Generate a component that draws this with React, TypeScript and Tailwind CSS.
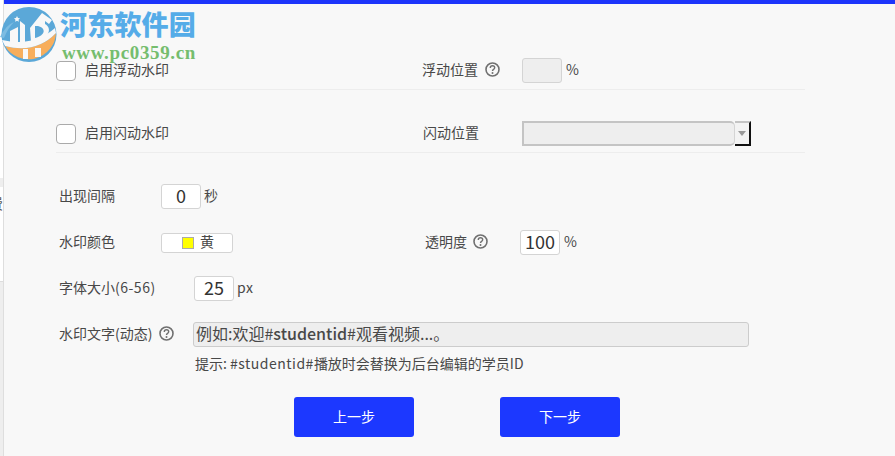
function Help() {
  return (
    <span className="pb-[3px] shrink-0">
      <svg width="15" height="15" viewBox="0 0 15 15" fill="none" className="block">
        <circle cx="7.5" cy="7.5" r="6.5" stroke="#707070" strokeWidth="1.6" />
        <path d="M5.3 5.9c0-1.4 1.1-2.1 2.2-2.1s2.2.8 2.2 2c0 1.6-2.2 1.6-2.2 3.2" stroke="#707070" strokeWidth="1.4" />
        <circle cx="7.5" cy="11" r="1" fill="#707070" />
      </svg>
    </span>
  );
}

function Logo() {
  return (
    <div className="absolute left-0 top-0 flex">
      <svg width="60" height="66" viewBox="0 0 60 66" className="shrink-0">
        <circle cx="29" cy="34.5" r="27.5" fill="#5ba8d8" />
        <path d="M5 46 Q36 54 56 33 A27.5 27.5 0 0 1 5 46Z" fill="#f7ae5c" />
        <path d="M2 40 Q34 47 55 28 L56 33 Q36 54 5 46Z" fill="#f8f8f8" />
        <path d="M10 42 V31 L18 27 V42Z" fill="#f8f8f8" />
        <path d="M20 42 V21 L25 25 V42Z" fill="#f8f8f8" />
        <path d="M30 28 L42 13 L52 20 L49 24 L45 21 V24 C52 28 50 37 37 41 L31 42Z" fill="#f8f8f8" />
        <path d="M35 26 H38 C46 28 46 35 35 38Z" fill="#5ba8d8" />
        <path d="M23 49 H28 V59 H23Z M35 48 H41 V57 H35Z" fill="#f8f8f8" />
        <path d="M0 37 Q6 25 14 22 Q8 28 4 38Z" fill="#7cbce2" />
        <path d="M17 16 l1 2 l2 .3 l-1.5 1.5 l.4 2 l-1.9 -1 l-1.9 1 l.4 -2 l-1.5 -1.5 l2 -.3Z" fill="#f8f8f8" />
      </svg>
      <div className="flex flex-col">
        <span className="font-['Noto_Sans_CJK_SC',serif] font-black text-[27px] leading-[30px] mt-[9px] text-[#55ace8] tracking-[0.2px] whitespace-nowrap">河东软件园</span>
        <span className="font-['Liberation_Serif',serif] font-bold text-[19px] leading-[16px] mt-[6px] ml-[2px] text-[#75bd6e] tracking-[0.65px] whitespace-nowrap">www.pc0359.cn</span>
      </div>
    </div>
  );
}

function Field({ value, disabled = false }: { value?: string; disabled?: boolean }) {
  return (
    <div className={`w-10 h-[25px] pb-[4px] rounded-[3px] border border-[#d4d4d4] flex items-center justify-center text-[18px] leading-none text-[#333] ${disabled ? "bg-[#eeeeee]" : "bg-white"}`}>
      {value}
    </div>
  );
}

function Label({ children, className = "" }: { children: React.ReactNode; className?: string }) {
  return <span className={`pb-[4px] leading-[16px] whitespace-nowrap ${className}`}>{children}</span>;
}

function Check({ label }: { label: string }) {
  return (
    <div className="flex items-center w-[366px]">
      <div className="w-5 h-5 rounded-[4px] border border-[#aaaaaa] bg-white" />
      <Label className="ml-[9px]">{label}</Label>
    </div>
  );
}

function SideStrip() {
  return (
    <div className="w-[3px] overflow-hidden flex flex-col bg-white shrink-0">
      <div className="h-[178px] shrink-0" />
      <div className="h-[9px] bg-[#eeeeee] shrink-0" />
      <div className="h-[94px] shrink-0 pt-[6px] text-[15px] leading-[20px] text-[#555]">
        <div className="-ml-[12px] w-[20px]">费</div>
      </div>
      <div className="flex-1 bg-[#eeeeee] border-t border-[#dddddd]" />
    </div>
  );
}

const rowLine = "w-[749px] h-[32px] flex border-b border-[#ededed]";

export default function App() {
  return (
    <div className="font-['Noto_Sans_CJK_SC',sans-serif] relative w-[895px] h-[456px] overflow-hidden flex bg-[#f8f8f8] text-[14px] text-[#484848]">
      <SideStrip />
      <div className="flex-1 border-l border-[#dedede] flex flex-col">
        <div className="h-[4px] shrink-0 bg-[#1c34fb]" />
        <div className="pl-[52px] pt-[54px]">
          <div className={rowLine}>
            <div className="flex items-center h-[25px]"><Check label="启用浮动水印" /></div>
            <div className="flex items-center h-[25px]">
              <Label>浮动位置</Label>
              <span className="ml-[7px] flex"><Help /></span>
              <div className="ml-[22px]"><Field disabled /></div>
              <Label className="ml-[4px]">%</Label>
            </div>
          </div>
          <div className={`${rowLine} mt-[31px]`}>
            <div className="flex items-center h-[25px]"><Check label="启用闪动水印" /></div>
            <div className="flex items-center h-[25px]">
              <Label className="ml-[1px]">闪动位置</Label>
              <div className="ml-[43px] w-[229px] h-[25px] flex">
                <div className="flex-1 bg-[#eeeeee] rounded-r-[5px] border-2 border-[#c4c4c4] border-r-[#d4d4d4] border-r" />
                <div className="w-[16px] bg-[#f3f3f3] flex items-center justify-center border-t-2 border-t-[#c4c4c4] border-r-2 border-r-[#111] border-b-2 border-b-[#111]">
                  <div className="w-0 h-0 border-x-[4px] border-x-transparent border-t-[5px] border-t-[#999]" />
                </div>
              </div>
            </div>
          </div>
          <div className="flex items-center mt-[31px] pl-[3px] h-[25px]">
            <Label className="w-[102px]">出现间隔</Label>
            <Field value="0" />
            <Label className="ml-[3px]">秒</Label>
          </div>
          <div className="flex items-center mt-[21px] pl-[3px] h-[25px]">
            <Label className="w-[102px]">水印颜色</Label>
            <div className="w-[72px] h-[20px] rounded-[3px] border border-[#d4d4d4] bg-white flex items-center pl-[20px] gap-[6px]">
              <span className="w-3 h-3 bg-[#ffff00] border border-[#aaa]" />
              <Label>黄</Label>
            </div>
            <Label className="ml-[192px]">透明度</Label>
            <span className="ml-[6px] flex"><Help /></span>
            <div className="ml-[32px]"><Field value="100" /></div>
            <Label className="ml-[4px]">%</Label>
          </div>
          <div className="flex items-center mt-[21px] pl-[3px] h-[25px]">
            <Label className="w-[135px]">字体大小<span className="tracking-[0.5px]">(6-56)</span></Label>
            <Field value="25" />
            <Label className="ml-[3px] tracking-[0.5px]">px</Label>
          </div>
          <div className="flex items-center mt-[21px] pl-[3px] h-[25px]">
            <Label className="w-[100px]">水印文字(动态)</Label>
            <Help />
            <div className="ml-[19px] w-[556px] h-[25px] pb-[3px] rounded-[3px] border border-[#cccccc] bg-[#eeeeee] pl-[2px] flex items-center text-[16px] leading-[20px] whitespace-nowrap">
              例如:欢迎#<span className="font-medium">studentid</span>#观看视频...。
            </div>
          </div>
          <div className="ml-[139px] mt-[7px] leading-[18px] whitespace-nowrap">提示: <span className="tracking-[0.5px]">#studentid#</span>播放时会替换为后台编辑的学员ID</div>
          <div className="flex ml-[238px] mt-[25px] gap-[86px]">
            <div className="w-[120px] h-10 pb-[2px] rounded-[3px] bg-[#1c38ff] text-white flex items-center justify-center">上一步</div>
            <div className="w-[120px] h-10 pb-[2px] rounded-[3px] bg-[#1c38ff] text-white flex items-center justify-center">下一步</div>
          </div>
        </div>
      </div>
      <Logo />
    </div>
  );
}
